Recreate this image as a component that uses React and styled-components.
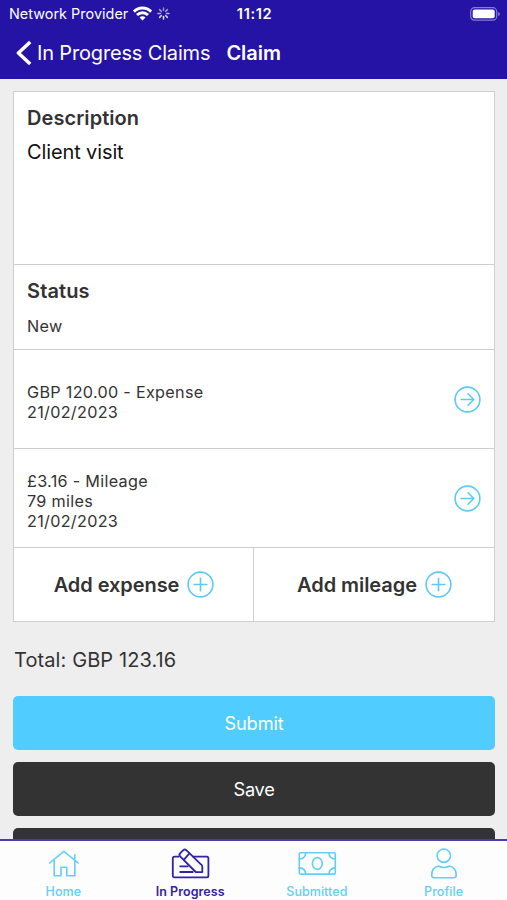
import React from "react";
import styled, { createGlobalStyle } from "styled-components";

const GlobalStyle = createGlobalStyle`
  * {
    box-sizing: border-box;
  }
  body {
    margin: 0;
    background-color: #eeeeee;
    font-family: Inter, "Liberation Sans", sans-serif;
    color: #333333;
  }
`;

const Screen = styled.div`
  display: flex;
  flex-direction: column;
  width: 507px;
  height: 900px;
  overflow: hidden;
`;

const Header = styled.header`
  flex: none;
  height: 79px;
  background-color: #2413a5;
  color: white;
`;

const StatusBar = styled.div`
  display: grid;
  grid-template-columns: 1fr auto 1fr;
  align-items: center;
  height: 27px;
  padding: 0 7px 0 9px;
`;

const Carrier = styled.div`
  display: flex;
  align-items: center;
  gap: 5px;
`;

const Battery = styled.div`
  display: flex;
  justify-content: flex-end;
`;

const NavBar = styled.nav`
  display: flex;
  align-items: center;
  height: 51px;
  padding-left: 16px;
`;

const BackButton = styled.button`
  display: flex;
  align-items: center;
  gap: 5px;
  margin-right: 16px;
  padding: 0;
  border: none;
  background: none;
  color: inherit;
  font-family: inherit;
`;

const Label = styled.span`
  font-size: ${props => props.$size}px;
  font-weight: ${props => props.$weight || 400};
  letter-spacing: ${props => props.$spacing || 0}px;
  line-height: ${props => props.$line || 24}px;
  color: ${props => props.$color || "inherit"};
  white-space: nowrap;
`;

const Content = styled.main`
  flex: 1;
  min-height: 0;
  overflow: hidden;
  padding: 12px 12px 0 13px;
`;

const Card = styled.section`
  height: 531px;
  border: 1px solid #cfcfcf;
  background-color: white;
`;

const Row = styled.div`
  display: flex;
  flex-direction: ${props => (props.$stacked ? "column" : "row")};
  align-items: ${props => (props.$stacked ? "flex-start" : "center")};
  justify-content: ${props => (props.$stacked ? "flex-start" : "space-between")};
  height: ${props => props.$height}px;
  padding: ${props => (props.$stacked ? "14px 13px 0" : "0 13px")};
  border-bottom: 1px solid #cfcfcf;
`;

const Lines = styled.div`
  display: flex;
  flex-direction: column;
  padding-top: 6px;
`;

const AddRow = styled.div`
  display: grid;
  grid-template-columns: 240px 1fr;
  height: 73px;
`;

const AddButton = styled.button`
  display: flex;
  align-items: center;
  justify-content: center;
  gap: 8px;
  padding: 0 0 0 1px;
  border: none;
  border-right: ${props => (props.$divided ? "1px solid #cfcfcf" : "none")};
  background: none;
  color: inherit;
  font-family: inherit;
`;

const Total = styled.p`
  margin: 26px 0 23px 1px;
  line-height: 23px;
`;

const ActionButton = styled.button`
  display: flex;
  align-items: center;
  justify-content: center;
  width: 100%;
  height: 54px;
  margin-bottom: 12px;
  padding: 0;
  border: none;
  border-radius: 5px;
  background-color: ${props => props.$background};
  color: white;
  font-family: inherit;
`;

const TabBar = styled.nav`
  flex: none;
  display: grid;
  grid-template-columns: repeat(4, 1fr);
  height: 61px;
  border-top: 2px solid #4a3aaa;
  background-color: #fdfdfd;
`;

const Tab = styled.button`
  display: flex;
  flex-direction: column;
  align-items: center;
  padding: 4px 0 0;
  border: none;
  background: none;
  color: ${props => (props.$active ? "#3322a6" : "#62cff8")};
  font-family: inherit;
`;

const Icon = styled.svg`
  flex: none;
  display: block;
  fill: none;
  stroke: currentColor;
  stroke-width: ${props => props.$stroke || 1.6};
  stroke-linecap: round;
  stroke-linejoin: round;
`;

const RoundIcon = styled(Icon)`
  color: #5bcbf5;
`;

const WifiIcon = () => (
  <Icon width="19" height="15" viewBox="0 0 19 15">
    <g strokeWidth="2.9" strokeLinecap="butt">
      <path d="M.9 5.6a12.2 12.2 0 0 1 17.2 0" />
      <path d="M4 9a7.8 7.8 0 0 1 11 0" />
    </g>
    <path d="M9.5 14.5 6.5 11.6a4.2 4.2 0 0 1 6 0z" fill="currentColor" stroke="none" />
  </Icon>
);

const SpinnerIcon = () => (
  <Icon width="13" height="13" viewBox="-6.5 -6.5 13 13">
    {[0.5, 0.55, 0.65, 0.8, 0.9, 0.8, 0.65, 0.55].map((opacity, i) => (
      <path key={i} d="M0-5.5V-3" strokeWidth="1.5" opacity={opacity} transform={`rotate(${i * 45})`} />
    ))}
  </Icon>
);

const BatteryIcon = () => (
  <Icon width="30" height="14" viewBox="0 0 30 14">
    <rect x=".7" y=".7" width="26" height="12.4" rx="3.8" strokeWidth="1.2" opacity=".45" />
    <rect x="2.7" y="2.6" width="22" height="8.6" rx="2" fill="currentColor" stroke="none" />
    <path d="M28.2 5v4q1.6-.6 1.6-2t-1.6-2z" fill="currentColor" stroke="none" opacity=".5" />
  </Icon>
);

const BackIcon = () => (
  <Icon width="16" height="26" viewBox="0 0 16 26">
    <path d="M14.2 1.9 2.4 13l11.8 11.1" strokeWidth="3.5" strokeLinecap="butt" />
  </Icon>
);

const ArrowIcon = () => (
  <RoundIcon width="27" height="27" viewBox="0 0 27 27">
    <circle cx="13.5" cy="13.5" r="12.4" />
    <path d="M7.2 13.5h12.5M14 7.8l5.8 5.7-5.8 5.7" />
  </RoundIcon>
);

const PlusIcon = () => (
  <RoundIcon width="27" height="27" viewBox="0 0 27 27">
    <circle cx="13.5" cy="13.5" r="12.4" />
    <path d="M7.2 13.5h12.6M13.5 7.2v12.6" />
  </RoundIcon>
);

const HomeIcon = () => (
  <Icon width="40" height="36" viewBox="0 0 40 36">
    <path d="M6.6 18 20.9 6.4 35.2 18M11.2 15.2v15.5h6.8v-8.4h5.8v8.4h8V15.2M31.8 15.2V9.8" />
  </Icon>
);

const ProgressIcon = () => (
  <Icon $stroke={1.8} width="40" height="36" viewBox="0 0 40 36">
    <path d="M8.6 11.6H4.4a1.6 1.6 0 0 0-1.6 1.6v17.6a1.6 1.6 0 0 0 1.6 1.6h32.4a1.6 1.6 0 0 0 1.6-1.6V13.2a1.6 1.6 0 0 0-1.6-1.6H23" />
    <path d="m10.2 8.2 3.1-3.1q1.5-1.3 3 .1l15.4 15q.6.6.6 1.5v5.4h-5.6q-.9 0-1.5-.6L10.1 11.3q-1.4-1.6.1-3.1zM13.8 14.8l5.6-6.4" />
    <path d="M10.2 21.3h7.6M10.2 27h12.6" />
  </Icon>
);

const MoneyIcon = () => (
  <Icon width="40" height="36" viewBox="0 0 40 36">
    <rect x="2.3" y="7.8" width="36" height="21.3" rx="1" />
    <ellipse cx="20.3" cy="18.5" rx="4.9" ry="5.9" />
    <path d="M8.7 7.8q-.3 5.9-6.4 6.2M31.9 7.8q.3 5.9 6.4 6.2M8.7 29.1q-.3-5.9-6.4-6.2M31.9 29.1q.3-5.9 6.4-6.2" />
  </Icon>
);

const ProfileIcon = () => (
  <Icon width="40" height="36" viewBox="0 0 40 36">
    <circle cx="19.8" cy="10.7" r="6.7" />
    <path d="M14.5 21q-6.8 1.6-6.8 9.2 0 2.5 2.5 2.5h19.5q2.5 0 2.5-2.5 0-7.6-6.8-9.2-5.4 3-10.9 0z" />
  </Icon>
);

const tabs = [
  { name: "Home", icon: <HomeIcon /> },
  { name: "In Progress", icon: <ProgressIcon />, active: true },
  { name: "Submitted", icon: <MoneyIcon /> },
  { name: "Profile", icon: <ProfileIcon /> },
];

const items = [
  ["GBP 120.00 - Expense", "21/02/2023"],
  ["£3.16 - Mileage", "79 miles", "21/02/2023"],
];

const App = () => {
  return (
    <Screen>
      <GlobalStyle />
      <Header>
        <StatusBar>
          <Carrier>
            <Label $size={14.4} $spacing={0.03}>Network Provider</Label>
            <WifiIcon />
            <SpinnerIcon />
          </Carrier>
          <Label $size={14.6} $weight={600} $spacing={0.6}>11:12</Label>
          <Battery>
            <BatteryIcon />
          </Battery>
        </StatusBar>
        <NavBar>
          <BackButton>
            <BackIcon />
            <Label $size={20} $spacing={-0.16}>In Progress Claims</Label>
          </BackButton>
          <Label $size={20} $weight={600}>Claim</Label>
        </NavBar>
      </Header>
      <Content>
        <Card>
          <Row $stacked $height={173}>
            <Label $size={20} $weight={600} $spacing={0.06}>Description</Label>
            <Label $size={20} $spacing={-0.12} $line={44} $color="#111111">Client visit</Label>
          </Row>
          <Row $stacked $height={85}>
            <Label $size={20} $weight={600} $spacing={0.12}>Status</Label>
            <Label $size={16.2} $spacing={0.28} $line={46}>New</Label>
          </Row>
          {items.map(lines => (
            <Row key={lines[0]} $height={99}>
              <Lines>
                {lines.map(line => (
                  <Label key={line} $size={16.2} $spacing={0.3} $line={20.3}>{line}</Label>
                ))}
              </Lines>
              <ArrowIcon />
            </Row>
          ))}
          <AddRow>
            <AddButton $divided>
              <Label $size={20} $weight={600} $spacing={-0.06}>Add expense</Label>
              <PlusIcon />
            </AddButton>
            <AddButton>
              <Label $size={20} $weight={600} $spacing={-0.06}>Add mileage</Label>
              <PlusIcon />
            </AddButton>
          </AddRow>
        </Card>
        <Total>
          <Label $size={20} $spacing={0.1}>Total: GBP 123.16</Label>
        </Total>
        <ActionButton $background="#50ccff">
          <Label $size={18.2} $spacing={-0.1}>Submit</Label>
        </ActionButton>
        <ActionButton $background="#333333">
          <Label $size={18.2} $spacing={-0.3}>Save</Label>
        </ActionButton>
        <ActionButton $background="#333333" aria-label="Delete" />
      </Content>
      <TabBar>
        {tabs.map(tab => (
          <Tab key={tab.name} $active={tab.active}>
            {tab.icon}
            <Label $size={12.5} $weight={tab.active ? 600 : 500} $spacing={0.06} $line={21}>{tab.name}</Label>
          </Tab>
        ))}
      </TabBar>
    </Screen>
  );
};

export default App;
